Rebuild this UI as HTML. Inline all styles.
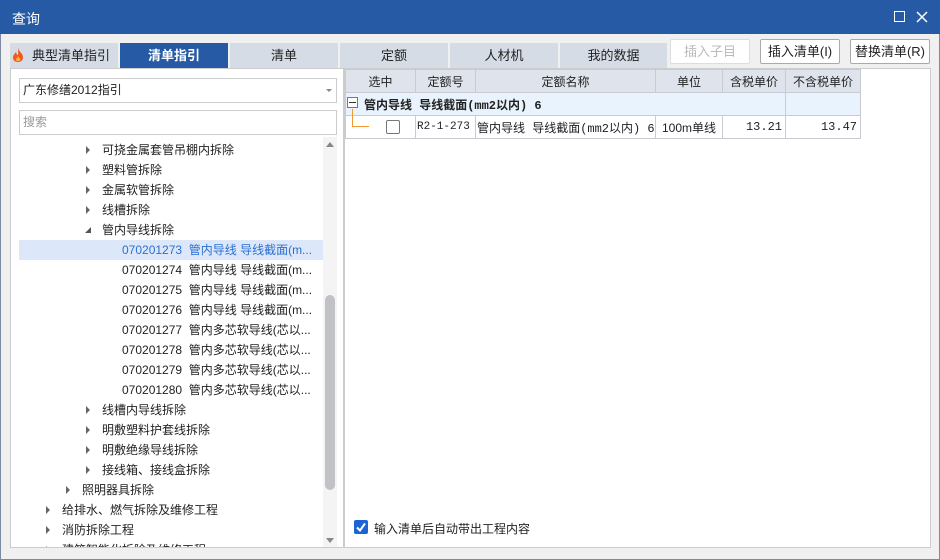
<!DOCTYPE html>
<html><head><meta charset="utf-8"><style>
*{box-sizing:border-box;margin:0;padding:0}
body{width:940px;height:560px;background:#f0f0f0;font-family:"Liberation Sans","Noto Sans CJK SC",sans-serif;font-size:12px;color:#222;position:relative;overflow:hidden}
.a{position:absolute}
#win{left:0;top:0;width:940px;height:560px;border:1px solid #7a8aa0}
#title{left:0;top:0;width:940px;height:34px;background:#275aa5;color:#fff;font-size:14px;padding:9px 0 0 12px}
.tab{top:43px;height:25px;background:#d6dce6;text-align:center;line-height:25px;font-size:13px;color:#222}
.btn{top:39px;height:25px;border:1px solid #aaa;background:#fff;border-radius:2px;text-align:center;line-height:23px;font-size:13px}
#lp{left:10px;top:68px;width:334px;height:480px;background:#fff;border:1px solid #ccc}
#rp{left:344px;top:68px;width:587px;height:480px;background:#fff;border:1px solid #ccc}
.row{left:19px;width:304px;height:20px;line-height:20px;font-size:12px;white-space:nowrap}
.tri{position:absolute;top:6px;width:0;height:0;border-left:4px solid #666;border-top:4px solid transparent;border-bottom:4px solid transparent}
table{border-collapse:collapse;position:absolute;left:345px;top:69px;font-size:12px;table-layout:fixed;width:515px}
td{border:1px solid #c8ccd2;height:23px;padding:0 3px;white-space:nowrap;overflow:hidden}
.h td{background:#dfe4ec;text-align:center}
.mono{font-family:"Liberation Mono","Noto Sans CJK SC",monospace}
</style></head><body>
<div id="win" class="a"></div>
<div id="title" class="a">查询</div>
<div class="a" style="left:894px;top:11px;width:11px;height:11px;border:1.2px solid #fff"></div>
<svg class="a" style="left:916px;top:11px" width="12" height="12"><path d="M1 1L11 11M11 1L1 11" stroke="#fff" stroke-width="1.5"/></svg>

<div class="tab a" style="left:10px;width:108px;padding-left:14px">典型清单指引</div>
<svg class="a" style="left:12px;top:47px" width="12" height="16" viewBox="0 0 12 16"><path d="M6 1C7 5 11 6 11 10.5 11 13.5 8.7 15 6 15 3.3 15 1 13.5 1 10.5 1 8 3 6.5 4 5 4.5 7 5 8 6 8 6.5 5.5 6 3 6 1Z" fill="#ef5a1f"/><path d="M6 9C7 11 8.5 11.5 8.2 13 7.8 14.3 4.3 14.3 3.9 13 3.7 11.6 5.5 11 6 9Z" fill="#ffb347"/></svg>
<div class="tab a" style="left:120px;width:108px;background:#275aa5;color:#fff;font-weight:bold">清单指引</div>
<div class="tab a" style="left:230px;width:108px">清单</div>
<div class="tab a" style="left:340px;width:108px">定额</div>
<div class="tab a" style="left:450px;width:108px">人材机</div>
<div class="tab a" style="left:560px;width:107px">我的数据</div>
<div class="btn a" style="left:670px;width:80px;color:#bbb;border-color:#ddd">插入子目</div>
<div class="btn a" style="left:760px;width:80px">插入清单(I)</div>
<div class="btn a" style="left:850px;width:80px">替换清单(R)</div>

<div id="lp" class="a"></div>
<div class="a" style="left:19px;top:78px;width:318px;height:25px;border:1px solid #ccc;background:#fff;line-height:23px;padding-left:3px;font-size:12px">广东修缮2012指引</div>
<div class="a" style="left:326px;top:89px;border-left:3px solid transparent;border-right:3px solid transparent;border-top:3px solid #888"></div>
<div class="a" style="left:19px;top:110px;width:318px;height:25px;border:1px solid #ccc;background:#fff;line-height:23px;padding-left:3px;color:#999">搜索</div>

<div class="a" style="left:323px;top:137px;width:14px;height:410px;background:#f4f4f4"></div>
<div class="a" style="left:325px;top:295px;width:10px;height:195px;background:#c0c2c6;border-radius:5px"></div>
<div class="a" style="left:326px;top:142px;border-left:4px solid transparent;border-right:4px solid transparent;border-bottom:5px solid #888"></div>
<div class="a" style="left:326px;top:538px;border-left:4px solid transparent;border-right:4px solid transparent;border-top:5px solid #888"></div>

<div class="a" style="left:19px;top:137px;width:304px;height:410px;overflow:hidden">
<div class="row a" style="left:0;top:3px"><i class="tri" style="left:67px"></i><span style="position:absolute;left:83px">可挠金属套管吊棚内拆除</span></div>
<div class="row a" style="left:0;top:23px"><i class="tri" style="left:67px"></i><span style="position:absolute;left:83px">塑料管拆除</span></div>
<div class="row a" style="left:0;top:43px"><i class="tri" style="left:67px"></i><span style="position:absolute;left:83px">金属软管拆除</span></div>
<div class="row a" style="left:0;top:63px"><i class="tri" style="left:67px"></i><span style="position:absolute;left:83px">线槽拆除</span></div>
<div class="row a" style="left:0;top:83px"><i class="a" style="left:66px;top:7px;border-right:6px solid #555;border-top:6px solid transparent"></i><span style="position:absolute;left:83px">管内导线拆除</span></div>
<div class="row a" style="left:0;top:103px;background:#dce8fa;color:#2b6fd1"><span style="position:absolute;left:103px">070201273&nbsp; 管内导线 导线截面(m...</span></div>
<div class="row a" style="left:0;top:123px"><span style="position:absolute;left:103px">070201274&nbsp; 管内导线 导线截面(m...</span></div>
<div class="row a" style="left:0;top:143px"><span style="position:absolute;left:103px">070201275&nbsp; 管内导线 导线截面(m...</span></div>
<div class="row a" style="left:0;top:163px"><span style="position:absolute;left:103px">070201276&nbsp; 管内导线 导线截面(m...</span></div>
<div class="row a" style="left:0;top:183px"><span style="position:absolute;left:103px">070201277&nbsp; 管内多芯软导线(芯以...</span></div>
<div class="row a" style="left:0;top:203px"><span style="position:absolute;left:103px">070201278&nbsp; 管内多芯软导线(芯以...</span></div>
<div class="row a" style="left:0;top:223px"><span style="position:absolute;left:103px">070201279&nbsp; 管内多芯软导线(芯以...</span></div>
<div class="row a" style="left:0;top:243px"><span style="position:absolute;left:103px">070201280&nbsp; 管内多芯软导线(芯以...</span></div>
<div class="row a" style="left:0;top:263px"><i class="tri" style="left:67px"></i><span style="position:absolute;left:83px">线槽内导线拆除</span></div>
<div class="row a" style="left:0;top:283px"><i class="tri" style="left:67px"></i><span style="position:absolute;left:83px">明敷塑料护套线拆除</span></div>
<div class="row a" style="left:0;top:303px"><i class="tri" style="left:67px"></i><span style="position:absolute;left:83px">明敷绝缘导线拆除</span></div>
<div class="row a" style="left:0;top:323px"><i class="tri" style="left:67px"></i><span style="position:absolute;left:83px">接线箱、接线盒拆除</span></div>
<div class="row a" style="left:0;top:343px"><i class="tri" style="left:47px"></i><span style="position:absolute;left:63px">照明器具拆除</span></div>
<div class="row a" style="left:0;top:363px"><i class="tri" style="left:27px"></i><span style="position:absolute;left:43px">给排水、燃气拆除及维修工程</span></div>
<div class="row a" style="left:0;top:383px"><i class="tri" style="left:27px"></i><span style="position:absolute;left:43px">消防拆除工程</span></div>
<div class="row a" style="left:0;top:403px"><i class="tri" style="left:27px"></i><span style="position:absolute;left:43px">建筑智能化拆除及维修工程</span></div>
</div>

<div id="rp" class="a"></div>
<table>
<colgroup><col style="width:70px"><col style="width:60px"><col style="width:180px"><col style="width:67px"><col style="width:63px"><col style="width:75px"></colgroup>
<tr class="h"><td>选中</td><td>定额号</td><td>定额名称</td><td>单位</td><td>含税单价</td><td>不含税单价</td></tr>
<tr style="background:#e8f3fd"><td colspan="5" class="mono" style="font-weight:bold;padding-left:18px">管内导线 导线截面(mm2以内) 6</td><td></td></tr>
<tr><td></td><td class="mono" style="font-size:11px;padding:0 1px">R2-1-273</td><td class="mono" style="padding:0 1px">管内导线 导线截面(mm2以内) 6</td><td style="text-align:center">100m单线</td><td class="mono" style="text-align:right">13.21</td><td class="mono" style="text-align:right">13.47</td></tr>
</table>
<div class="a" style="left:347px;top:97px;width:11px;height:11px;border:1px solid #777;background:#fff"></div>
<div class="a" style="left:349px;top:102px;width:7px;height:1px;background:#333"></div>
<div class="a" style="left:352px;top:109px;width:1px;height:17px;background:#f39a2e"></div>
<div class="a" style="left:352px;top:126px;width:17px;height:1px;background:#f39a2e"></div>
<div class="a" style="left:386px;top:120px;width:14px;height:14px;border:1px solid #777;border-radius:2px;background:#fff"></div>

<div class="a" style="left:354px;top:520px;width:14px;height:14px;background:#1a64d6;border-radius:2px"></div>
<svg class="a" style="left:354px;top:520px" width="14" height="14"><path d="M3 7.5L6 10.5 11 3.5" stroke="#fff" stroke-width="2" fill="none"/></svg>
<div class="a" style="left:374px;top:520px;font-size:12px">输入清单后自动带出工程内容</div>
</body></html>
